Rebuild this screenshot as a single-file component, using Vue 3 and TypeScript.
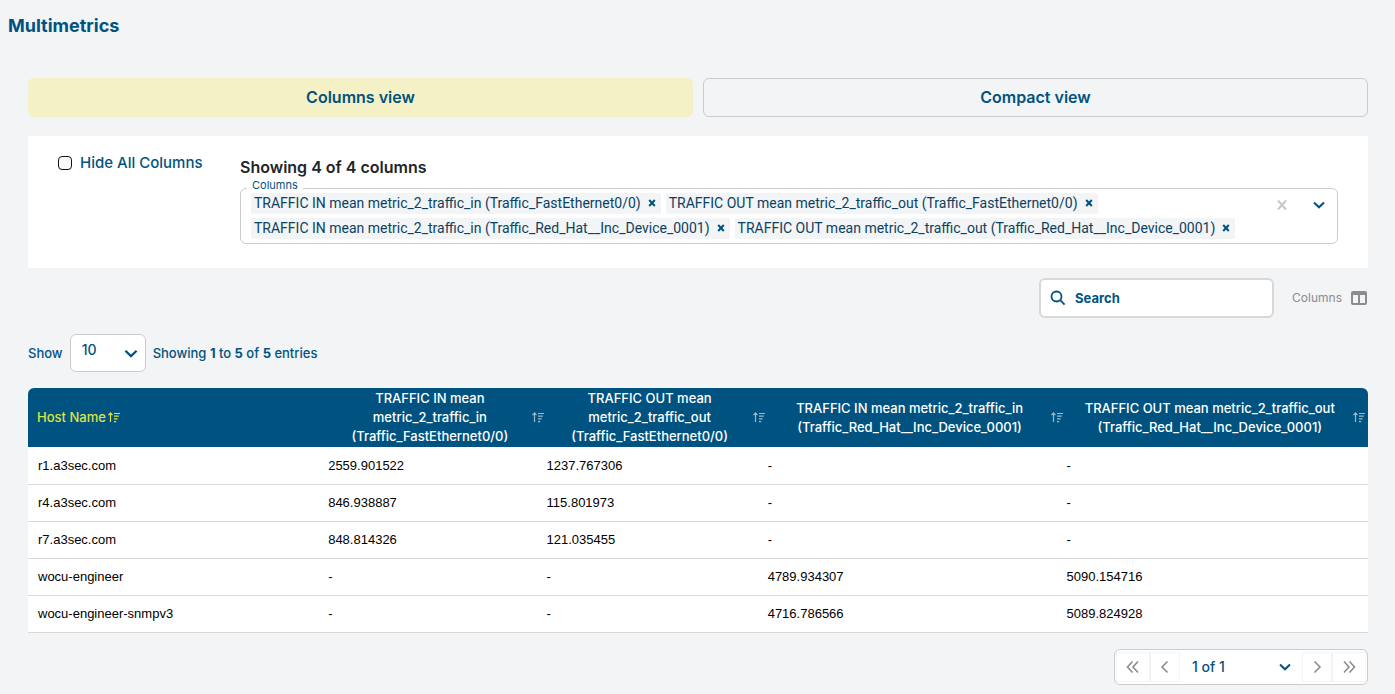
<script setup lang="ts">
import { computed, ref } from 'vue'

interface Metric {
  id: number
  name: string
  header: string[]
}

interface Row {
  host: string
  values: string[]
}

const metrics = ref<Metric[]>([
  {
    id: 1,
    name: 'TRAFFIC IN mean metric_2_traffic_in (Traffic_FastEthernet0/0)',
    header: ['TRAFFIC IN mean', 'metric_2_traffic_in', '(Traffic_FastEthernet0/0)'],
  },
  {
    id: 2,
    name: 'TRAFFIC OUT mean metric_2_traffic_out (Traffic_FastEthernet0/0)',
    header: ['TRAFFIC OUT mean', 'metric_2_traffic_out', '(Traffic_FastEthernet0/0)'],
  },
  {
    id: 3,
    name: 'TRAFFIC IN mean metric_2_traffic_in (Traffic_Red_Hat__Inc_Device_0001)',
    header: ['TRAFFIC IN mean metric_2_traffic_in', '(Traffic_Red_Hat__Inc_Device_0001)'],
  },
  {
    id: 4,
    name: 'TRAFFIC OUT mean metric_2_traffic_out (Traffic_Red_Hat__Inc_Device_0001)',
    header: ['TRAFFIC OUT mean metric_2_traffic_out', '(Traffic_Red_Hat__Inc_Device_0001)'],
  },
])

const rows: Row[] = [
  { host: 'r1.a3sec.com', values: ['2559.901522', '1237.767306', '-', '-'] },
  { host: 'r4.a3sec.com', values: ['846.938887', '115.801973', '-', '-'] },
  { host: 'r7.a3sec.com', values: ['848.814326', '121.035455', '-', '-'] },
  { host: 'wocu-engineer', values: ['-', '-', '4789.934307', '5090.154716'] },
  { host: 'wocu-engineer-snmpv3', values: ['-', '-', '4716.786566', '5089.824928'] },
]

const view = ref<'columns' | 'compact'>('columns')
const removed = ref<number[]>([])
const hideAll = ref(false)
const search = ref('')
const pageSize = ref(10)

const shown = computed(() =>
  hideAll.value ? [] : metrics.value.filter((m) => !removed.value.includes(m.id)),
)
const filtered = computed(() =>
  rows.filter((r) => r.host.toLowerCase().includes(search.value.toLowerCase())),
)

function remove(id: number) {
  removed.value.push(id)
}
function clearAll() {
  removed.value = metrics.value.map((m) => m.id)
}
</script>

<template>
  <main class="page">
    <h1 class="title">Multimetrics</h1>

    <div class="content">
      <div class="tabs">
        <button type="button" class="tab" :class="{ active: view === 'columns' }" @click="view = 'columns'">
          Columns view
        </button>
        <button type="button" class="tab" :class="{ active: view === 'compact' }" @click="view = 'compact'">
          Compact view
        </button>
      </div>

      <section class="panel">
        <label class="hide-all">
          <input v-model="hideAll" type="checkbox" />
          <span>Hide All Columns</span>
        </label>

        <div class="picker">
          <h2 class="picker-title">Showing {{ shown.length }} of {{ metrics.length }} columns</h2>
          <fieldset class="multi">
            <legend>Columns</legend>
            <div class="multi-body">
              <ul class="chips">
                <li v-for="m in shown" :key="m.id" class="chip">
                  <span>{{ m.name }}</span>
                  <button type="button" :aria-label="'Remove ' + m.name" @click="remove(m.id)">
                    <svg width="8" height="8" viewBox="0 0 8 8" aria-hidden="true">
                      <path d="M1.2 1L6.8 7M6.8 1L1.2 7" />
                    </svg>
                  </button>
                </li>
              </ul>
              <button type="button" class="clear" aria-label="Clear columns" @click="clearAll">
                <svg width="12" height="12" viewBox="0 0 12 12" aria-hidden="true">
                  <path d="M2 1.5L10 10.5M10 1.5L2 10.5" />
                </svg>
              </button>
              <button type="button" class="open" aria-label="Open column list">
                <svg width="12" height="8" viewBox="0 0 12 8" aria-hidden="true">
                  <path d="M1 1.5L6 6.3L11 1.5" />
                </svg>
              </button>
            </div>
          </fieldset>
        </div>
      </section>

      <div class="tools">
        <label class="search">
          <svg width="16" height="16" viewBox="0 0 16 16" aria-hidden="true">
            <circle cx="6.5" cy="6.5" r="5" />
            <path d="M10.2 10.2L14.6 14.6" />
          </svg>
          <input v-model="search" type="text" placeholder="Search" aria-label="Search" />
        </label>
        <button type="button" class="columns-btn">
          <span>Columns</span>
          <svg width="16" height="14" viewBox="0 0 16 14" aria-hidden="true">
            <path
              fill-rule="evenodd"
              d="M2 0H14a2 2 0 0 1 2 2V12a2 2 0 0 1-2 2H2a2 2 0 0 1-2-2V2a2 2 0 0 1 2-2ZM2 4V12H7V4ZM9 4V12H14V4Z"
            />
          </svg>
        </button>
      </div>

      <div class="length">
        <label for="page-size">Show</label>
        <div class="select-wrap size">
          <select id="page-size" v-model="pageSize">
            <option :value="10">10</option>
            <option :value="25">25</option>
            <option :value="50">50</option>
          </select>
          <svg width="14" height="9" viewBox="0 0 12 8" aria-hidden="true">
            <path d="M1 1.5L6 6.3L11 1.5" />
          </svg>
        </div>
        <p>
          Showing <b>1</b> to <b>{{ filtered.length }}</b> of <b>{{ filtered.length }}</b> entries
        </p>
      </div>

      <table class="grid">
        <colgroup>
          <col class="c-host" />
          <col v-for="m in shown" :key="m.id" :class="'c-' + m.id" />
        </colgroup>
        <thead>
          <tr>
            <th scope="col" class="sorted">
              <div class="head">
                <span>Host Name</span>
                <svg width="12" height="11" viewBox="0 0 12 11" aria-hidden="true">
                  <path d="M2.5 10V1.2M0.5 3.2L2.5 1L4.5 3.2M6 1.5H12M6 4.2H10.8M6 6.9H9.6M6 9.6H8.2" />
                </svg>
              </div>
            </th>
            <th v-for="m in shown" :key="m.id" scope="col">
              <div class="head">
                <span class="lines"><span v-for="line in m.header" :key="line">{{ line }}</span></span>
                <svg width="12" height="11" viewBox="0 0 12 11" aria-hidden="true">
                  <path d="M2.5 10V1.2M0.5 3.2L2.5 1L4.5 3.2M6 1.5H12M6 4.2H10.8M6 6.9H9.6M6 9.6H8.2" />
                </svg>
              </div>
            </th>
          </tr>
        </thead>
        <tbody>
          <tr v-for="r in filtered" :key="r.host">
            <td>{{ r.host }}</td>
            <td v-for="m in shown" :key="m.id">{{ r.values[m.id - 1] }}</td>
          </tr>
        </tbody>
      </table>

      <nav class="pager" aria-label="Pagination">
        <button type="button" aria-label="First page">
          <svg width="14" height="14" viewBox="0 0 14 14" aria-hidden="true">
            <path d="M6.5 1.5L1.5 7L6.5 12.5M12 1.5L7 7L12 12.5" />
          </svg>
        </button>
        <button type="button" aria-label="Previous page">
          <svg width="14" height="14" viewBox="0 0 14 14" aria-hidden="true">
            <path d="M9.5 1.5L4 7L9.5 12.5" />
          </svg>
        </button>
        <div class="select-wrap pages">
          <select aria-label="Page">
            <option>1 of 1</option>
          </select>
          <svg width="12" height="8" viewBox="0 0 12 8" aria-hidden="true">
            <path d="M1 1.5L6 6.3L11 1.5" />
          </svg>
        </div>
        <button type="button" aria-label="Next page">
          <svg width="14" height="14" viewBox="0 0 14 14" aria-hidden="true">
            <path d="M4.5 1.5L10 7L4.5 12.5" />
          </svg>
        </button>
        <button type="button" aria-label="Last page">
          <svg width="14" height="14" viewBox="0 0 14 14" aria-hidden="true">
            <path d="M2 1.5L7 7L2 12.5M7.5 1.5L12.5 7L7.5 12.5" />
          </svg>
        </button>
      </nav>
    </div>
  </main>
</template>

<style>
body {
  margin: 0;
  background: #f2f4f6;
}
</style>

<style scoped>
.page {
  --navy: #005380;
  --line: #cccccc;
  color: var(--navy);
  font-family: Inter, 'Liberation Sans', sans-serif;
  font-size: 13px;
  line-height: 20px;
}
*,
*::before {
  box-sizing: border-box;
}
button,
input,
select {
  margin: 0;
  padding: 0;
  border: 0;
  background: none;
  color: inherit;
  font: inherit;
}
button {
  cursor: pointer;
}
svg {
  display: block;
  flex: none;
  fill: none;
  stroke: currentColor;
  stroke-width: 2;
}
.title {
  margin: 0;
  padding: 14px 8px 0;
  font-size: 18px;
  line-height: 24px;
  font-weight: 700;
}
.content {
  padding: 40px 27px 8px 28px;
}
.tabs {
  display: grid;
  grid-template-columns: 1fr 1fr;
  gap: 10px;
}
.tab {
  height: 39px;
  padding-bottom: 2px;
  border: 1px solid var(--line);
  border-radius: 6px;
  font-size: 16px;
  font-weight: 600;
}
.tab.active {
  border-color: #f4f1c6;
  background: #f4f1c6;
}
.panel {
  display: flex;
  margin-top: 19px;
  padding: 16px 30px 24px;
  background: #fff;
}
.hide-all {
  display: flex;
  flex: none;
  align-items: center;
  align-self: flex-start;
  gap: 8px;
  width: 182px;
  height: 22px;
  font-size: 15px;
  font-weight: 500;
}
.hide-all input {
  appearance: none;
  width: 14px;
  height: 14px;
  border: 1px solid #111;
  border-radius: 4px;
  background: #fafafa;
}
.hide-all input:checked {
  background: var(--navy);
}
.picker {
  flex: 1;
  min-width: 0;
}
.picker-title {
  margin: 0;
  padding: 4px 0 1px;
  color: #212529;
  font-size: 16px;
  line-height: 22px;
  font-weight: 600;
}
.multi {
  min-width: 0;
  margin: 0;
  padding: 0 12px 4px 10px;
  border: 1px solid var(--line);
  border-radius: 6px;
}
.multi legend {
  margin-left: -4px;
  padding: 0 5px 6px;
  font-size: 11px;
  line-height: 12px;
}
.multi-body {
  display: flex;
  margin-top: -4px;
}
.chips {
  display: flex;
  flex: 1;
  flex-wrap: wrap;
  gap: 4px 5px;
  margin: 0;
  padding: 0;
  list-style: none;
}
.chip {
  display: flex;
  align-items: center;
  gap: 7px;
  height: 21px;
  padding: 0 5px 1px 3px;
  border-radius: 2px;
  background: #f2f4f6;
  color: #0b4263;
  font-family: Roboto, 'Liberation Sans', sans-serif;
  font-size: 14px;
}
.chip button {
  color: var(--navy);
}
.clear,
.open {
  align-self: flex-start;
  height: 24px;
}
.clear {
  margin-right: 25px;
  color: #c8c8c8;
}
.tools {
  display: flex;
  align-items: center;
  justify-content: flex-end;
  gap: 18px;
  margin-top: 10px;
}
.search {
  display: flex;
  align-items: center;
  gap: 9px;
  width: 235px;
  height: 40px;
  padding: 0 9px;
  border: 2px solid #d8d8d8;
  border-radius: 6px;
  background: #fff;
}
.search svg {
  stroke-width: 1.8;
}
.search input {
  flex: 1;
  min-width: 0;
  outline: 0;
  font-weight: 700;
}
.search input::placeholder {
  color: var(--navy);
  opacity: 1;
}
.columns-btn {
  display: flex;
  align-items: center;
  gap: 9px;
  padding-right: 1px;
  color: #8c8c8c;
  font-size: 12px;
}
.columns-btn svg {
  fill: currentColor;
  stroke: none;
}
.length {
  display: flex;
  align-items: center;
  gap: 7px;
  margin-top: 16px;
  font-weight: 500;
}
.length p {
  margin: 0;
}
.length b {
  font-weight: 700;
}
.select-wrap {
  display: grid;
  align-items: center;
}
.select-wrap > * {
  grid-area: 1 / 1;
}
.select-wrap svg {
  justify-self: end;
  margin-right: 7px;
  pointer-events: none;
}
.select-wrap select {
  appearance: none;
  width: 100%;
  height: 100%;
  font-size: 14px;
  font-weight: 500;
}
.size {
  width: 76px;
  height: 38px;
  border: 1px solid var(--line);
  border-radius: 6px;
  background: #fff;
}
.size select {
  padding: 0 12px 6px 11px;
}
.grid {
  width: 100%;
  margin-top: 16px;
  border-collapse: separate;
  border-spacing: 0;
  table-layout: fixed;
}
.c-host {
  width: 22.4%;
}
.c-1 {
  width: 16.3%;
}
.c-2 {
  width: 16.5%;
}
.c-3 {
  width: 22.3%;
}
.grid th {
  height: 59px;
  padding: 0 3px 0 0;
  background: var(--navy);
  color: #fff;
  font-weight: 500;
  line-height: 19px;
}
.grid th:first-child {
  border-top-left-radius: 6px;
}
.grid th:last-child {
  border-top-right-radius: 6px;
}
.grid th.sorted {
  padding-left: 9px;
  color: #dbe442;
}
.head {
  display: flex;
  align-items: center;
}
.sorted .head {
  gap: 2px;
}
.head svg {
  stroke-width: 1.2;
}
.lines {
  flex: 1;
}
.lines > span {
  display: block;
  white-space: nowrap;
}
th:not(.sorted) svg {
  opacity: 0.6;
}
.grid td {
  height: 37px;
  padding: 0;
  border-bottom: 1px solid #d8d8d8;
  background: #fff;
  color: #000;
  font-family: 'Liberation Sans', Arial, sans-serif;
  font-size: 13px;
}
.grid tbody tr:first-child td {
  height: 38px;
}
.grid td:first-child {
  padding-left: 10px;
}
.pager {
  display: flex;
  width: 254px;
  height: 36px;
  margin: 16px 0 0 auto;
  padding: 2px 1px;
  border: 1px solid var(--line);
  border-radius: 6px;
  background: #fff;
}
.pager > button {
  display: grid;
  place-items: center;
  width: 30px;
  border: 1px solid #f2f4f6;
  color: #8c8c8c;
}
.pager > button:first-child,
.pager > button:last-child {
  width: 34px;
}
.pager > button svg {
  stroke-width: 1.6;
}
.pages {
  flex: 1;
}
.pages select {
  padding: 0 12px;
}
.pages svg {
  margin-right: 11px;
}
</style>
